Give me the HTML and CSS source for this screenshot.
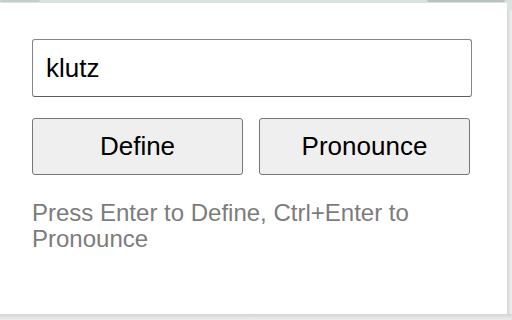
FILE: index.html
```html
<!DOCTYPE html>
<html>
<head>
<meta charset="utf-8">
<link rel="stylesheet" href="styles.css">
</head>
<body>
<div class="topstrip"><span class="blob blob-left"></span><span class="blob blob-right"></span></div>
<div class="frame">
  <main class="popup">
    <input class="word" type="text" value="klutz">
    <div class="actions">
      <button class="btn">Define</button>
      <button class="btn">Pronounce</button>
    </div>
    <p class="hint">Press Enter to Define, Ctrl+Enter to Pronounce</p>
  </main>
  <div class="side"></div>
</div>
<div class="bottom"></div>
</body>
</html>
```

FILE: styles.css
```css
html, body {
  margin: 0;
  padding: 0;
  width: 512px;
  height: 320px;
  overflow: hidden;
  background: #ececec;
  font-family: "Liberation Sans", Arial, sans-serif;
}
.topstrip {
  height: 3px;
  background: #d9e1e1;
  display: flex;
  justify-content: space-between;
}
.blob {
  display: block;
  height: 2px;
  background: #c5cccc;
  border-radius: 0 0 6px 6px;
}
.blob-left { width: 40px; }
.blob-right { width: 78px; margin-right: 7px; background: #b9c1c1; }
.frame {
  display: flex;
  height: 311px;
}
.popup {
  width: 443px;
  background: #fff;
  padding: 36px 32px 0 32px;
  box-sizing: content-box;
}
.side {
  width: 5px;
  background: linear-gradient(to right, #d6d6d6, #e6e6e6 60%, #eeeeee);
  border-top: 7px solid #dbe2e2;
  box-sizing: border-box;
}
.bottom {
  height: 6px;
  background: linear-gradient(to bottom, #d4d4d4, #e4e4e4 60%, #ededed);
}
.word {
  display: block;
  box-sizing: border-box;
  width: 440px;
  height: 58px;
  margin: 0;
  padding: 0 13px;
  border: 1px solid #858585;
  border-bottom-color: #5c5c5c;
  border-radius: 3px;
  font-family: "Liberation Sans", Arial, sans-serif;
  font-size: 26px;
  color: #000;
  background: #fff;
  outline: none;
}
.actions {
  display: flex;
  gap: 16px;
  margin-top: 21px;
  width: 438px;
}
.btn {
  box-sizing: border-box;
  width: 211px;
  height: 57px;
  margin: 0;
  padding: 0;
  border: 1px solid #767676;
  border-radius: 3px;
  background: #efefef;
  font-family: "Liberation Sans", Arial, sans-serif;
  font-size: 26px;
  color: #000;
}
.hint {
  margin: 25px 0 0 0;
  width: 440px;
  font-size: 24px;
  line-height: 26px;
  color: #7c7c7c;
}
```
